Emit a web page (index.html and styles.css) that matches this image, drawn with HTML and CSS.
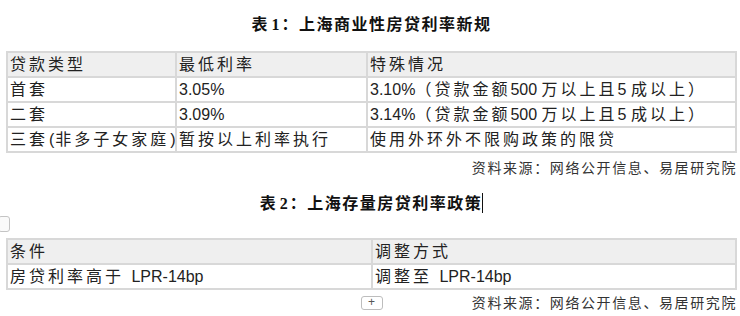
FILE: index.html
```html
<!DOCTYPE html>
<html lang="zh-CN">
<head>
<meta charset="utf-8">
<title>上海房贷利率</title>
<link rel="stylesheet" href="styles.css">
</head>
<body>
<div class="page">
  <h1 class="title"><span class="lat">表 1</span>：上海商业性房贷利率新规</h1>
  <table class="grid t1">
    <colgroup><col class="c1"><col class="c2"><col></colgroup>
    <tr class="head"><td>贷款类型</td><td>最低利率</td><td>特殊情况</td></tr>
    <tr><td>首套</td><td><span class="lat">3.05%</span></td><td><span class="lat">3.10%</span>（贷款金额<span class="lat">500 </span>万以上且<span class="lat">5 </span>成以上）</td></tr>
    <tr><td>二套</td><td><span class="lat">3.09%</span></td><td><span class="lat">3.14%</span>（贷款金额<span class="lat">500 </span>万以上且<span class="lat">5 </span>成以上）</td></tr>
    <tr><td>三套<span class="paren">(</span>非多子女家庭<span class="paren">)</span></td><td>暂按以上利率执行</td><td>使用外环外不限购政策的限贷</td></tr>
  </table>
  <p class="source">资料来源：网络公开信息、易居研究院</p>
  <h1 class="title"><span class="lat">表 2</span>：上海存量房贷利率政策<span class="caret"></span></h1>
  <div class="wrap">
    <span class="handle"></span>
    <table class="grid t2">
      <colgroup><col class="h1c"><col></colgroup>
      <tr class="head"><td>条件</td><td>调整方式</td></tr>
      <tr><td>房贷利率高于 <span class="lat">LPR-14bp</span></td><td>调整至 <span class="lat">LPR-14bp</span></td></tr>
    </table>
  </div>
  <div class="foot">
    <span class="add">+</span>
    <p class="source end">资料来源：网络公开信息、易居研究院</p>
  </div>
</div>
</body>
</html>
```
FILE: styles.css
```css
html, body {
  margin: 0;
  background: #ffffff;
}
.page {
  width: 731px;
  margin-left: 6px;
  display: flex;
  flex-direction: column;
  font-family: "Liberation Sans", "Noto Sans CJK SC", sans-serif;
  color: #222;
}
.title {
  margin: 0;
  text-align: center;
  font-family: "Liberation Serif", "Noto Sans CJK SC", serif;
  font-size: 16px;
  font-weight: 700;
  line-height: 18px;
  letter-spacing: 1.5px;
  color: #111;
}
.page > .title:first-child {
  margin-top: 16px;
}
.title .lat {
  letter-spacing: 0;
  margin-right: 2px;
}
.caret {
  display: inline-block;
  width: 1px;
  height: 20px;
  background: #111;
  vertical-align: -4px;
}
.grid {
  width: 731px;
  table-layout: fixed;
  border-collapse: collapse;
  border: 2px solid #d8d8d8;
  font-size: 16px;
  letter-spacing: 3px;
  color: #222;
}
.t1 {
  margin-top: 17px;
}
.grid td {
  border: 2px solid #d8d8d8;
  height: 23px;
  padding: 0 0 0 2px;
  line-height: 20px;
  white-space: nowrap;
  overflow: hidden;
}
.grid .head td {
  background: #efefef;
}
.grid .lat {
  letter-spacing: 0;
}
.grid .paren {
  letter-spacing: 0;
  margin: 0 1px;
}
.c1 { width: 169px; }
.c2 { width: 191px; }
.h1c { width: 365px; }
.source {
  margin: 5px 0 0;
  align-self: flex-end;
  font-family: "Noto Sans CJK SC", sans-serif;
  font-size: 14px;
  line-height: 18px;
  letter-spacing: 1.6px;
  color: #333;
}
.source + .title {
  margin-top: 17px;
}
.wrap {
  position: relative;
  margin-top: 25px;
}
.handle {
  position: absolute;
  left: -8px;
  top: -22px;
  width: 10px;
  height: 14px;
  border: 1px solid #c4c4c4;
  border-radius: 3px;
  background: #fafafa;
}
.foot {
  display: grid;
  grid-template-columns: 1fr auto 1fr;
  align-items: center;
  margin-top: 3px;
}
.add {
  grid-column: 2;
  width: 20px;
  height: 12px;
  border: 1px solid #bdbdbd;
  border-radius: 3px;
  font-size: 12px;
  line-height: 11px;
  text-align: center;
  color: #555;
  margin-top: 2px;
}
.foot .source.end {
  grid-column: 3;
  justify-self: end;
  margin: 0;
}
```
